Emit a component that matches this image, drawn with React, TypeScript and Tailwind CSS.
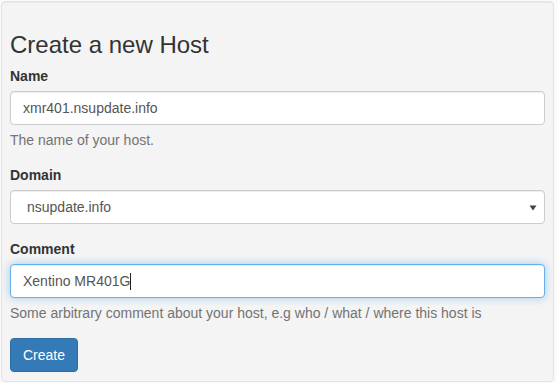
import React from 'react';

const font = { fontFamily: '"Liberation Sans", Arial, sans-serif' };

export default function App() {
  return (
    <div className="w-[557px] h-[383px] bg-[#fafafa] pt-px pl-px" style={font}>
      <div className="w-[553px] h-[381px] bg-[#f4f4f4] border border-[#e3e3e3] rounded-[4px] shadow-[inset_0_1px_1px_rgba(0,0,0,0.05)] px-2 pt-[30px] text-[14px] leading-[20px] text-[#333]">
        <h3 className="text-[24px] leading-[26px] font-normal text-[#333] mb-2">
          Create a new Host
        </h3>

        <div className="mb-[15px]">
          <label className="block font-bold mb-[5px]">Name</label>
          <div className="h-[34px] bg-white border border-[#ccc] rounded-[4px] shadow-[inset_0_1px_1px_rgba(0,0,0,0.075)] px-3 flex items-center text-[#555]">
            xmr401.nsupdate.info
          </div>
          <p className="mt-[5px] text-[#737373]">The name of your host.</p>
        </div>

        <div className="mb-[15px]">
          <label className="block font-bold mb-[5px]">Domain</label>
          <div className="h-[34px] bg-white border border-[#ccc] rounded-[4px] shadow-[inset_0_1px_1px_rgba(0,0,0,0.075)] pl-4 pr-[7px] flex items-center justify-between text-[#555]">
            <span>nsupdate.info</span>
            <svg width="8" height="6" viewBox="0 0 8 6" className="mt-px">
              <path d="M0.5 0.5 L7.5 0.5 L4 5.5 Z" fill="#444" />
            </svg>
          </div>
        </div>

        <div className="mb-[15px]">
          <label className="block font-bold mb-[5px]">Comment</label>
          <div className="h-[34px] bg-white border border-[#66afe9] rounded-[4px] shadow-[inset_0_1px_1px_rgba(0,0,0,0.075),0_0_8px_rgba(102,175,233,0.6)] px-3 flex items-center text-[#555]">
            <span>Xentino MR401G</span>
            <span className="inline-block w-px h-[17px] bg-[#222]" />
          </div>
          <p className="mt-[5px] text-[#737373]">
            Some arbitrary comment about your host, e.g who / what / where this host is
          </p>
        </div>

        <button
          type="button"
          className="h-[34px] px-3 bg-[#337ab7] border border-[#2e6da4] rounded-[4px] text-white text-[14px]"
          style={font}>
          Create
        </button>
      </div>
    </div>
  );
}
